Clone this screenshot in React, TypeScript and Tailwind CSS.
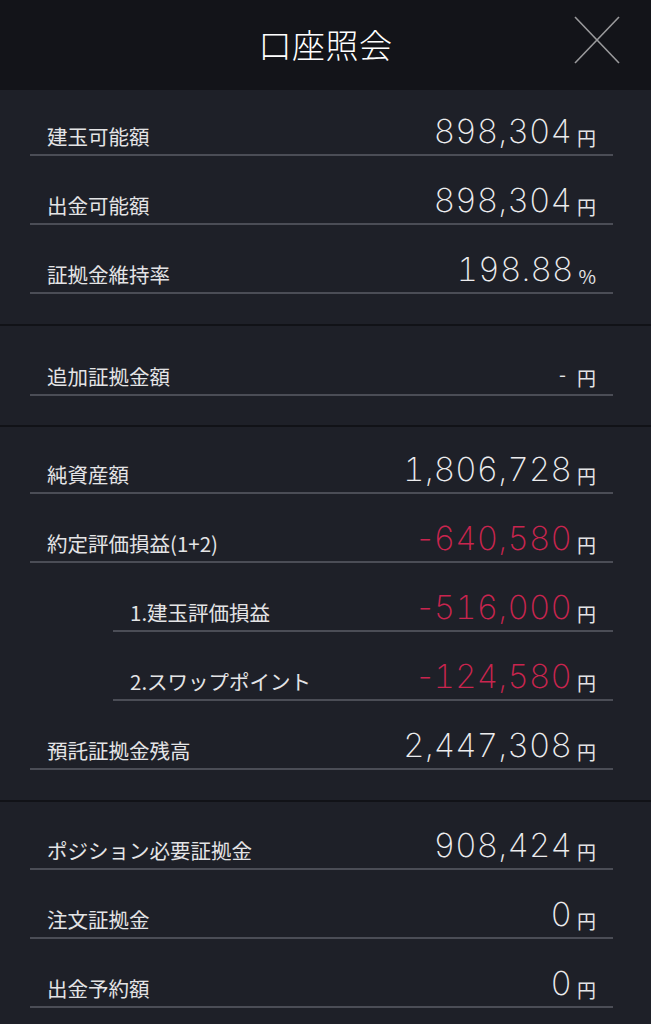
import React from "react";

type Row = { label: string; value: string; unit: string; red?: boolean; indent?: boolean };

const sections: { pt: string; pb: string; rows: Row[] }[] = [
  {
    pt: "pt-[18px]",
    pb: "pb-[30px]",
    rows: [
      { label: "建玉可能額", value: "898,304", unit: "円" },
      { label: "出金可能額", value: "898,304", unit: "円" },
      { label: "証拠金維持率", value: "198.88", unit: "%" },
    ],
  },
  {
    pt: "pt-[22px]",
    pb: "pb-[29px]",
    rows: [{ label: "追加証拠金額", value: "-", unit: "円" }],
  },
  {
    pt: "pt-[19px]",
    pb: "pb-[30px]",
    rows: [
      { label: "純資産額", value: "1,806,728", unit: "円" },
      { label: "約定評価損益(1+2)", value: "-640,580", unit: "円", red: true },
      { label: "1.建玉評価損益", value: "-516,000", unit: "円", red: true, indent: true },
      { label: "2.スワップポイント", value: "-124,580", unit: "円", red: true, indent: true },
      { label: "預託証拠金残高", value: "2,447,308", unit: "円" },
    ],
  },
  {
    pt: "pt-[20px]",
    pb: "pb-[30px]",
    rows: [
      { label: "ポジション必要証拠金", value: "908,424", unit: "円" },
      { label: "注文証拠金", value: "0", unit: "円" },
      { label: "出金予約額", value: "0", unit: "円" },
    ],
  },
];

const jp = { fontFamily: '"Noto Sans CJK JP", "Noto Sans", sans-serif' };
const num = { fontFamily: 'Inter, "Noto Sans CJK JP", sans-serif' };

function Value({ v }: { v: string }) {
  if (v.startsWith("-")) {
    return (
      <>
        <span className="tracking-[-2px]">-</span>
        <span>{v.slice(1)}</span>
      </>
    );
  }
  return <span>{v}</span>;
}

function RowView({ r }: { r: Row }) {
  return (
    <div
      className={`flex h-[48px] items-end justify-between border-b-2 border-[#4b4d56] pb-[6px] pr-[17px] ${
        r.indent ? "ml-[113px] pl-[17px]" : "ml-[30px] pl-[17px]"
      } mr-[38px]`}
    >
      <span className="text-[20.5px] leading-none text-[#e4e4e6] mb-[2px]" style={jp}>
        {r.label}
      </span>
      <span className="flex items-end">
        {r.value === "-" ? (
          <span className="text-[20px] leading-none text-[#e4e4e6] mr-[6px] mb-[4px]" style={jp}>
            -
          </span>
        ) : (
          <span
            className={`text-[33px] font-extralight leading-none tabular-nums tracking-[0.2px] ${
              r.red ? "text-[#c9254f]" : "text-[#ececee]"
            }`}
            style={num}
          >
            <Value v={r.value} />
          </span>
        )}
        <span className="ml-[5px] text-[19px] leading-none text-[#e4e4e6] mb-[1px]" style={jp}>
          {r.unit}
        </span>
      </span>
    </div>
  );
}

export default function App() {
  return (
    <div className="w-[651px] h-[1024px] overflow-hidden bg-[#1e2028]">
      <div className="relative flex h-[90px] items-center justify-center bg-[#131419]">
        <span className="text-[33px] font-light text-white tracking-[0.5px]" style={jp}>
          口座照会
        </span>
        <svg
          className="absolute left-[574px] top-[16px]"
          width="46"
          height="48"
          viewBox="0 0 46 48"
        >
          <line x1="1" y1="1" x2="45" y2="47" stroke="#9a9a9c" strokeWidth="1.6" />
          <line x1="45" y1="1" x2="1" y2="47" stroke="#9a9a9c" strokeWidth="1.6" />
        </svg>
      </div>
      {sections.map((s, i) => (
        <div key={i} className={`${s.pt} ${s.pb} flex flex-col gap-[21px] border-b-2 border-[#111217]`}>
          {s.rows.map((r, j) => (
            <RowView key={j} r={r} />
          ))}
        </div>
      ))}
    </div>
  );
}
